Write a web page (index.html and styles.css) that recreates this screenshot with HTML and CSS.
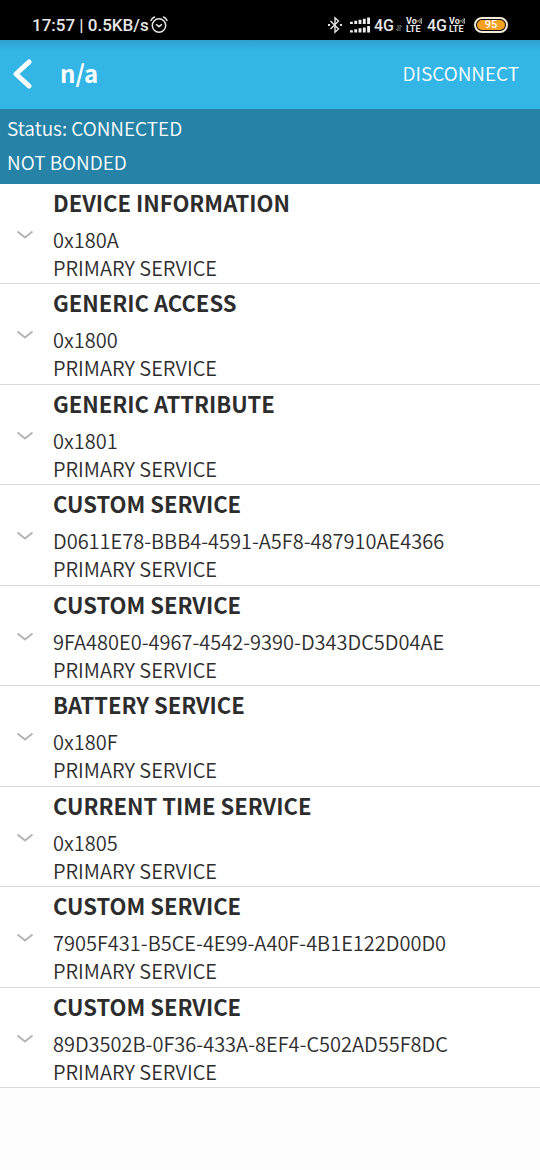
FILE: index.html
```html
<!DOCTYPE html>
<html lang="en">
<head>
<meta charset="utf-8">
<meta name="viewport" content="width=device-width, initial-scale=1">
<title>n/a</title>
<link rel="stylesheet" href="styles.css">
</head>
<body>
<svg class="sprite" aria-hidden="true">
  <symbol id="chevron" viewBox="0 0 18 10"><path d="M1.500 1.500L9 7.500l7.500-6" fill="none" stroke="#b4b4b4" stroke-width="2" stroke-linejoin="round"/></symbol>
  <symbol id="waves" viewBox="0 0 5 8"><path d="M1 3v2M2.700 2q1.200 2 0 4M4 1q1.800 3 0 6" fill="none" stroke="#ccc" stroke-width=".9"/></symbol>
</svg>
<div class="system-bar">
  <div class="system-left">
    <span class="clock">17:57 | 0.5KB/s</span>
    <svg class="alarm" viewBox="0 0 18 18" fill="none" stroke="#e4e4e4" stroke-width="1.500" stroke-linecap="round"><circle cx="9" cy="9.500" r="6.700"/><path d="M6.500 8.700L9 10.700l2.500-2M1 4.500Q2 2 4.500 1M17 4.500Q16 2 13.500 1"/></svg>
  </div>
  <div class="system-right">
    <svg class="bluetooth" viewBox="0 0 16 18" fill="none" stroke="#e4e4e4" stroke-width="1.400"><path d="M3.500 5l8 8L8 16.200V1.800L11.500 5l-8 8"/><path d="M1 9h2M13 9h2" stroke-width="2"/></svg>
    <svg class="signal" viewBox="0 0 21 16" fill="#eee"><path d="M0 4.500h3V7H0zM4.500 3.500h3V7h-3zM9 2.500h3V7H9zM13.500 1.500h3V7h-3zM18 0h3v7h-3zM0 13.500h3V16H0zM4.500 12.500h3V16h-3zM9 11.500h3V16H9zM13.500 10.500h3V16h-3zM18 9h3v7h-3z"/></svg>
    <span class="network">4G</span>
    <svg class="traffic" viewBox="0 0 6 8" fill="none" stroke="#777" stroke-width="1"><path d="M2 1v6L0 5M4 7V1l2 2"/></svg>
    <span class="volte"><span class="volte-line">Vo<svg class="waves"><use href="#waves"/></svg></span><span class="volte-line">LTE</span></span>
    <span class="network">4G</span>
    <span class="volte"><span class="volte-line">Vo<svg class="waves"><use href="#waves"/></svg></span><span class="volte-line">LTE</span></span>
    <span class="battery"><span class="battery-level">95</span></span>
  </div>
</div>
<header class="app-bar">
  <button class="back" type="button" aria-label="Back"><svg class="back-icon" viewBox="0 0 20 32"><path d="M17 4L4 16l13 12" fill="none" stroke="#fff" stroke-width="5" stroke-linecap="round" stroke-linejoin="round"/></svg></button>
  <h1 class="device-name">n/a</h1>
  <button class="disconnect" type="button">DISCONNECT</button>
</header>
<section class="connection">
  <p class="connection-line">Status: CONNECTED</p>
  <p class="connection-line">NOT BONDED</p>
</section>
<main>
  <ul class="services">
    <li class="service"><button class="expand" type="button" aria-label="Expand Device Information"><svg class="chevron"><use href="#chevron"/></svg></button><div><h2 class="service-name">DEVICE INFORMATION</h2><p class="service-line">0x180A</p><p class="service-line">PRIMARY SERVICE</p></div></li>
    <li class="service"><button class="expand" type="button" aria-label="Expand Generic Access"><svg class="chevron"><use href="#chevron"/></svg></button><div><h2 class="service-name">GENERIC ACCESS</h2><p class="service-line">0x1800</p><p class="service-line">PRIMARY SERVICE</p></div></li>
    <li class="service"><button class="expand" type="button" aria-label="Expand Generic Attribute"><svg class="chevron"><use href="#chevron"/></svg></button><div><h2 class="service-name">GENERIC ATTRIBUTE</h2><p class="service-line">0x1801</p><p class="service-line">PRIMARY SERVICE</p></div></li>
    <li class="service"><button class="expand" type="button" aria-label="Expand Custom Service"><svg class="chevron"><use href="#chevron"/></svg></button><div><h2 class="service-name">CUSTOM SERVICE</h2><p class="service-line">D0611E78-BBB4-4591-A5F8-487910AE4366</p><p class="service-line">PRIMARY SERVICE</p></div></li>
    <li class="service"><button class="expand" type="button" aria-label="Expand Custom Service"><svg class="chevron"><use href="#chevron"/></svg></button><div><h2 class="service-name">CUSTOM SERVICE</h2><p class="service-line">9FA480E0-4967-4542-9390-D343DC5D04AE</p><p class="service-line">PRIMARY SERVICE</p></div></li>
    <li class="service"><button class="expand" type="button" aria-label="Expand Battery Service"><svg class="chevron"><use href="#chevron"/></svg></button><div><h2 class="service-name">BATTERY SERVICE</h2><p class="service-line">0x180F</p><p class="service-line">PRIMARY SERVICE</p></div></li>
    <li class="service"><button class="expand" type="button" aria-label="Expand Current Time Service"><svg class="chevron"><use href="#chevron"/></svg></button><div><h2 class="service-name">CURRENT TIME SERVICE</h2><p class="service-line">0x1805</p><p class="service-line">PRIMARY SERVICE</p></div></li>
    <li class="service"><button class="expand" type="button" aria-label="Expand Custom Service"><svg class="chevron"><use href="#chevron"/></svg></button><div><h2 class="service-name">CUSTOM SERVICE</h2><p class="service-line">7905F431-B5CE-4E99-A40F-4B1E122D00D0</p><p class="service-line">PRIMARY SERVICE</p></div></li>
    <li class="service"><button class="expand" type="button" aria-label="Expand Custom Service"><svg class="chevron"><use href="#chevron"/></svg></button><div><h2 class="service-name">CUSTOM SERVICE</h2><p class="service-line">89D3502B-0F36-433A-8EF4-C502AD55F8DC</p><p class="service-line">PRIMARY SERVICE</p></div></li>
  </ul>
</main>
</body>
</html>
```

FILE: styles.css
```css
* { box-sizing: border-box; }
body, h1, h2, p, ul { margin: 0; padding: 0; }
body {
  min-height: 100vh;
  background: #fdfdfd;
  color: #2d2d2d;
  font-family: "Noto Sans CJK SC", "Noto Sans", sans-serif;
  font-size: 20px;
  font-weight: 350;
}
button {
  padding: 0;
  border: 0;
  background: none;
  color: inherit;
  font: inherit;
  cursor: pointer;
}
svg { display: block; flex: none; }
.sprite { position: absolute; width: 0; height: 0; }

.system-bar {
  display: flex;
  justify-content: space-between;
  height: 40px;
  padding: 10px 32px 0;
  background: #000;
  color: #e8e8e8;
  font-family: Roboto, sans-serif;
  font-weight: 500;
}
.system-left, .system-right { display: flex; align-items: center; height: 30px; }
.system-left { gap: 1px; }
.clock { font-size: 17px; }
.alarm { width: 18px; height: 18px; }
.bluetooth { width: 16px; height: 18px; margin-right: 7px; }
.signal { width: 20px; height: 16px; margin-right: 4px; }
.network { margin-right: 2px; font-size: 16px; }
.traffic { width: 6px; height: 8px; margin: 6px 4px 0 0; }
.volte {
  display: flex;
  flex-direction: column;
  width: 17px;
  margin-right: 4px;
  font-size: 9px;
  font-weight: 700;
  line-height: 8px;
}
.volte-line { display: flex; }
.waves { width: 5px; height: 8px; }
.battery {
  width: 34px;
  height: 16px;
  margin-left: 4px;
  padding: 1px;
  border: 2px solid #f4ead8;
  border-radius: 8px;
}
.battery-level {
  display: block;
  border-radius: 5px;
  background: #f5a021;
  color: #fff;
  font-size: 11px;
  line-height: 10px;
  text-align: center;
}

.app-bar {
  display: flex;
  align-items: center;
  height: 69px;
  padding: 0 21px 2px 12px;
  background: linear-gradient(#2fa2cf, #33b5e5 12px);
  color: #fff;
}
.back { width: 48px; }
.back-icon { width: 20px; height: 32px; }
.device-name { flex: 1; font-size: 24px; line-height: 34px; padding-bottom: 2px; }
.disconnect { font-size: 19px; line-height: 34px; padding-bottom: 2px; }

.connection {
  padding: 2px 7px 5px;
  background: #2682a6;
  color: #fff;
}
.connection-line { font-size: 19px; line-height: 34px; }

.services { list-style: none; background: #fff; }
.service { display: flex; padding-bottom: 1px; border-bottom: 1px solid #d9d9d9; }
.service:nth-child(even) { padding-bottom: 2px; }
.expand { flex: none; width: 53px; padding: 4px 0 0 16px; }
.chevron { width: 18px; height: 10px; }
.service-name { margin-bottom: 6px; font-size: 22px; line-height: 36px; }
.service-line { font-size: 20px; line-height: 28px; }
```
